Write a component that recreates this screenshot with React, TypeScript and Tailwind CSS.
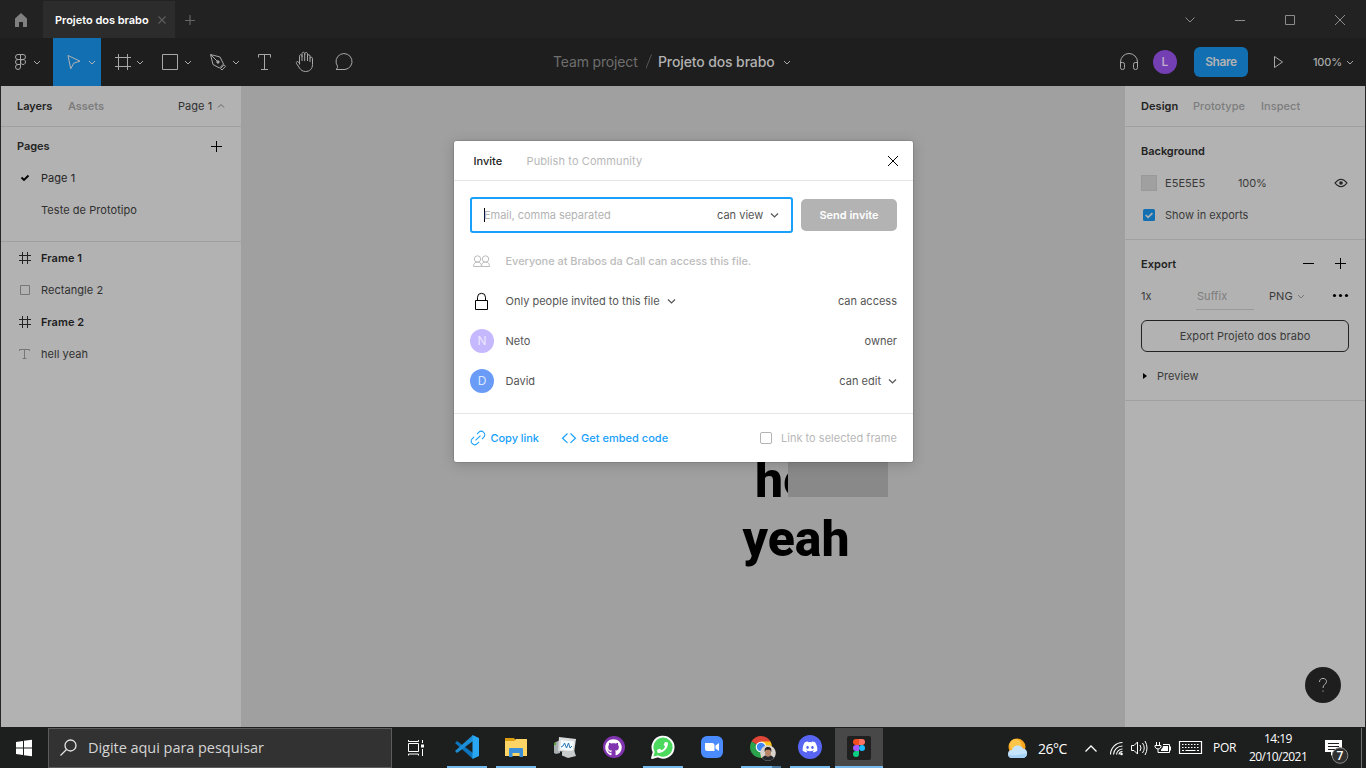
import React from "react";
import { FaDiscord, FaGithub, FaPhoneAlt } from "react-icons/fa";

type IcoProps = {
  box: [number, number, number, number];
  children: React.ReactNode;
  className?: string;
};

/* Icon drawn in window coordinates; box is x, y, width, height */
function Ico({ box, children, className = "" }: IcoProps) {
  return (
    <svg
      className={"block shrink-0 " + className}
      width={box[2]}
      height={box[3]}
      viewBox={box.join(" ")}
      fill="none"
      stroke="currentColor"
    >
      {children}
    </svg>
  );
}

function TitleBar() {
  return (
    <div className="flex h-[38px] bg-[#222222]">
      <Ico box={[0, 0, 43, 38]} className="text-[#808080]">
        <path d="M15 18.500L21 13l6 5.500V27h-4v-5h-4v5h-4z" fill="currentColor" stroke="none" />
      </Ico>
      <div className="mt-px flex h-[37px] w-[132px] items-center bg-[#2c2c2c] pl-3 text-white">
        <span className="w-[94px] whitespace-nowrap text-[11px] leading-4 font-semibold tracking-[-0.02px]">Projeto dos brabo</span>
        <Ico box={[149, 10, 26, 20]} className="text-[#5c5c5c]">
          <path d="M158.500 16.500l7 7M165.500 16.500l-7 7" strokeWidth="1.200" />
        </Ico>
      </div>
      <Ico box={[175, 0, 40, 38]} className="text-[#646464]">
        <path d="M185 20.500h10M190 15v10" strokeWidth="1.200" />
      </Ico>
      <div className="flex-1" />
      <Ico box={[1166, 0, 200, 38]} className="text-[#8c8c8c]">
        <path d="M1185.500 17.500l4.500 4.500 4.500-4.500M1235 20.500h10M1285.500 15.500h9v9h-9zM1335 15l10 10M1345 15l-10 10" />
      </Ico>
    </div>
  );
}

function Toolbar() {
  return (
    <div className="flex h-12 items-center bg-[#1e1e1e] text-[#a8a8a8]">
      <Ico box={[0, 38, 53, 48]}>
        <path d="M20.500 54.500h-2.500a2.500 2.500 0 0 0 0 5h2.500zM20.500 54.500h2.500a2.500 2.500 0 0 1 0 5h-2.500zM20.500 59.500h-2.500a2.500 2.500 0 0 0 0 5h2.500zM23 59.500a2.500 2.500 0 1 0 .01 0zM20.500 64.500h-2.500a2.500 2.500 0 1 0 2.500 2.500z" />
        <path d="M34 61l3 3 3-3" />
      </Ico>
      <Ico box={[53, 38, 48, 48]} className="bg-[#1270b2] text-[#b2b2b2]">
        <path d="M68 55.500l12 5.700-6.300 2-3 5.600z" />
        <path d="M89 61l3 3 3-3" />
      </Ico>
      <Ico box={[101, 38, 48, 48]}>
        <path d="M118.500 54v16M127.500 54v16M115 57.500h16M115 66.500h16" />
        <path d="M137 61l3 3 3-3" />
      </Ico>
      <Ico box={[149, 38, 48, 48]}>
        <path d="M162.500 54.500h15v15h-15z" />
        <path d="M185 61l3 3 3-3" />
      </Ico>
      <Ico box={[197, 38, 48, 48]}>
        <path d="M210.500 54.500l9.500 2.500 3.500 7-4 4-6.500-3.500zM211 55l6.500 6.500M220.500 68.500l3.500-3.700 1.500 1.500-3.500 3.700z" />
        <circle cx="218" cy="62" r="1.200" fill="currentColor" />
        <path d="M233 61l3 3 3-3" />
      </Ico>
      <Ico box={[245, 38, 40, 48]}>
        <path d="M258.500 57.500v-3h12v3M264.500 54.500v15M261 69.500h7" />
      </Ico>
      <Ico box={[285, 38, 40, 48]}>
        <path d="M299.500 64.500V56.200c0-2 2.500-2 2.500 0V61M302 57v-3.200c0-2 2.700-2 2.700 0V61M304.700 55v-1c0-2 2.800-2 2.800 0v7M307.500 56c0-1.700 2.500-1.700 2.500 0v6M310 58.500c0-1.700 2.500-1.700 2.500 0v6c0 4.500-3 7-7 7-3 0-4.500-1.500-6-3.500l-3-4.500c-.8-1.500 1-2.700 2-1.500l1.500 2" />
      </Ico>
      <Ico box={[325, 38, 40, 48]}>
        <path d="M336 69.500c1.300-1 1.800-2 1.500-3.300A8 8 0 1 1 345 69.500z" />
      </Ico>
      <div className="ml-[188px] flex items-center text-[14px] leading-5 whitespace-nowrap">
        <span className="w-[93px] text-[#6e6e6e] tracking-[-0.15px]">Team project</span>
        <Ico box={[646, 52, 12, 20]} className="text-[#555555]">
          <path d="M645.500 69.500l6-15" />
        </Ico>
        <span className="w-[125px] font-medium text-[#b2b2b2] tracking-[-0.12px]">Projeto dos brabo</span>
        <Ico box={[783, 52, 12, 20]}>
          <path d="M784 61l3 3 3-3" />
        </Ico>
      </div>
      <div className="flex-1" />
      <Ico box={[1115, 38, 38, 48]}>
        <path d="M1120.500 66v-4a8.500 8.500 0 0 1 17 0v4M1120.500 62.500h2.200q1.800 0 1.800 1.800v3.400q0 1.800-1.800 1.800h-.4q-1.800 0-1.800-1.800zM1137.500 62.500h-2.200q-1.800 0-1.800 1.800v3.400q0 1.800 1.800 1.800h.4q1.800 0 1.800-1.800z" />
      </Ico>
      <div className="flex size-6 items-center justify-center rounded-full bg-[#733fb2] text-[12px] font-medium text-[#c0b0cc]">L</div>
      <div className="ml-[17px] flex h-[30px] w-[54px] items-center justify-center rounded-[6px] bg-[#1270b2] text-[12px] font-semibold tracking-[-0.4px] text-[#b2b2b2]">Share</div>
      <Ico box={[1248, 38, 65, 48]}>
        <path d="M1274.500 56.500v11l8-5.500z" />
      </Ico>
      <span className="w-[29px] whitespace-nowrap text-[11px] font-medium tracking-[-0.2px]">100%</span>
      <Ico box={[1342, 38, 24, 48]}>
        <path d="M1347 61l3 3 3-3" />
      </Ico>
    </div>
  );
}

function HashIcon() {
  return (
    <Ico box={[17, 250, 24, 16]} className="text-[#232323]">
      <path d="M22.500 252v12M27.500 252v12M19 255.500h12M19 260.500h12" />
    </Ico>
  );
}

function LeftPanel() {
  return (
    <div className="flex w-[240px] flex-col bg-[#b2b2b2] text-[#303030]">
      <div className="flex h-[41px] items-center border-b border-[#a0a0a0] pl-4">
        <span className="w-[51px] font-semibold tracking-[-0.05px] text-[#232323]">Layers</span>
        <span className="w-[110px] font-semibold tracking-[-0.05px] text-[#7d7d7d]">Assets</span>
        <span className="w-[38px] whitespace-nowrap">Page 1</span>
        <Ico box={[216, 98, 12, 16]} className="text-[#666666]">
          <path d="M218 107.500l3-3 3 3" />
        </Ico>
      </div>
      <div className="h-[115px] border-b border-[#a0a0a0]">
        <div className="flex h-[35px] items-center pt-[3px] pl-4">
          <span className="w-[189px] font-semibold tracking-[-0.05px] text-[#232323]">Pages</span>
          <Ico box={[206, 136, 24, 18]} className="text-black">
            <path d="M211 145.500h11M216.500 140v11" />
          </Ico>
        </div>
        <div className="flex h-8 items-center pl-4 text-[#232323]">
          <Ico box={[17, 170, 24, 16]} className="text-black">
            <path d="M21.500 177.500l2.500 2.500 4.500-4.500" strokeWidth="1.800" />
          </Ico>
          Page 1
        </div>
        <div className="flex h-8 items-center pl-10">Teste de Prototipo</div>
      </div>
      <div className="flex h-8 items-center pl-4 font-semibold text-[#1c1c1c]">
        <HashIcon />
        Frame 1
      </div>
      <div className="flex h-8 items-center pl-4">
        <Ico box={[17, 282, 24, 16]} className="text-[#777777]">
          <path d="M20.500 285.500h9v9h-9z" />
        </Ico>
        Rectangle 2
      </div>
      <div className="flex h-8 items-center pl-4 font-semibold text-[#1c1c1c]">
        <HashIcon />
        Frame 2
      </div>
      <div className="flex h-8 items-center pl-4">
        <Ico box={[17, 346, 24, 16]} className="text-[#777777]">
          <path d="M19.500 351v-1.500h10v1.500M24.500 349.500v9M22.500 358.500h4" />
        </Ico>
        hell yeah
      </div>
    </div>
  );
}

function Canvas() {
  return (
    <div className="relative flex-1 overflow-hidden bg-[#a0a0a0]">
      <div className="absolute top-[365px] left-[475px] w-[160px] text-center font-['Roboto'] text-[50px] leading-[59px] font-extrabold tracking-normal text-black">
        hell
        <br />
        yeah
      </div>
      <div className="absolute top-[311px] left-[547px] h-[100px] w-[100px] bg-[#898989]" />
    </div>
  );
}

function RightPanel() {
  return (
    <div className="relative flex w-[240px] flex-col bg-[#b2b2b2] text-[#3a3a3a]">
      <div className="flex h-[41px] items-center border-b border-[#a0a0a0] pl-4 font-medium text-[#7d7d7d]">
        <span className="w-[52px] font-semibold text-[#232323]">Design</span>
        <span className="w-[68px]">Prototype</span>
        <span>Inspect</span>
      </div>
      <div className="h-[113px] border-b border-[#a0a0a0] pt-2 pl-4">
        <div className="flex h-8 items-center font-semibold tracking-[-0.03px] text-[#232323]">Background</div>
        <div className="flex h-8 items-center">
          <div className="mr-2 size-4 border border-[#999999] bg-[#a0a0a0]" />
          <span className="w-[73px]">E5E5E5</span>
          <span className="w-[95px] tracking-[-0.1px]">100%</span>
          <Ico box={[1333, 175, 16, 16]} className="text-[#232323]">
            <path d="M1335 183q6-7.500 12 0-6 7.500-12 0z" strokeWidth="1.200" />
            <circle cx="1341" cy="183" r="1.800" fill="currentColor" stroke="none" />
          </Ico>
        </div>
        <div className="flex h-8 items-center tracking-normal">
          <Ico box={[1141, 207, 24, 16]} className="text-[#b2b2b2]">
            <rect x="1143" y="209" width="12" height="12" rx="1.500" fill="#1270b2" stroke="none" />
            <path d="M1145.700 215l2.400 2.400 4.300-4.300" strokeWidth="1.600" />
          </Ico>
          Show in exports
        </div>
      </div>
      <div className="h-[161px] border-b border-[#a0a0a0] px-4 pt-2">
        <div className="flex h-8 items-center">
          <span className="w-[152px] font-semibold text-[#232323]">Export</span>
          <Ico box={[1293, 254, 56, 20]} className="text-black">
            <path d="M1303 263.500h11M1335 263.500h11M1340.500 258v11" />
          </Ico>
        </div>
        <div className="flex h-8 items-center">
          <span className="w-[55px]">1x</span>
          <span className="flex h-[27px] w-[58px] items-center border-b border-[#9a9a9a] pl-px text-[#7d7d7d]">Suffix</span>
          <span className="w-[27px] pl-[15px]">PNG</span>
          <Ico box={[1281, 288, 68, 16]} className="text-[#777777]">
            <path d="M1298 295l3 3 3-3" />
            <g fill="black" stroke="none">
              <circle cx="1334.500" cy="295.500" r="1.600" />
              <circle cx="1340.500" cy="295.500" r="1.600" />
              <circle cx="1346.500" cy="295.500" r="1.600" />
            </g>
          </Ico>
        </div>
        <div className="mt-2 flex h-8 items-center justify-center rounded-[6px] border border-[#232323]">Export Projeto dos brabo</div>
        <div className="mt-2 flex h-8 items-center">
          <Ico box={[1141, 368, 16, 16]} className="text-black">
            <path d="M1143 373v6l4-3z" fill="currentColor" stroke="none" />
          </Ico>
          Preview
        </div>
      </div>
      <div className="absolute top-[581px] left-[180px] flex size-9 items-center justify-center rounded-full bg-[#1e1e1e]">
        <Ico box={[1313, 675, 20, 20]} className="text-[#b2b2b2]">
          <path d="M1319.500 682c0-5 7-4.500 7-.5 0 3-3.500 2.500-3.500 6.500M1323 690.500v1.200" />
        </Ico>
      </div>
    </div>
  );
}

function InviteModal() {
  return (
    <div className="absolute top-[141px] left-[454px] h-[321px] w-[459px] rounded-[2px] bg-white tracking-[0.01px] text-[#555555] shadow-[0_2px_14px_rgba(0,0,0,0.18),0_0_0_0.5px_rgba(0,0,0,0.2)]">
      <div className="flex h-10 items-center border-b border-[#e5e5e5] pl-[19.5px]">
        <span className="w-[53px] font-medium text-[#222222]">Invite</span>
        <span className="w-[354.5px] text-[#b8b8b8] tracking-[0.1px]">Publish to Community</span>
        <Ico box={[881, 151, 24, 20]} className="text-black">
          <path d="M888 156l10 10M898 156l-10 10" />
        </Ico>
      </div>
      <div className="flex h-[60px] items-center gap-2 px-4 pt-2">
        <div className="flex h-9 w-[323px] items-center rounded-[3px] border-2 border-[#18a0fb]">
          <div className="ml-3 h-[14px] w-px bg-black" />
          <span className="-ml-px w-[233px] text-[#b3b3b3] tracking-[-0.04px]">Email, comma separated</span>
          <span className="w-[51px]">can view</span>
          <Ico box={[768, 207, 16, 16]}>
            <path d="M771 213.500l3.500 3.500 3.500-3.500" strokeWidth="1.200" />
          </Ico>
        </div>
        <div className="flex h-8 w-24 items-center justify-center rounded-[5px] bg-[#b3b3b3] font-semibold text-white">Send invite</div>
      </div>
      <div className="flex h-10 items-center pl-4 font-medium tracking-[-0.05px] text-[#bcbcbc]">
        <Ico box={[470, 251, 35.5, 20]} className="text-[#bcbcbc]">
          <circle cx="477.500" cy="259" r="3.200" />
          <circle cx="485.500" cy="259" r="3.200" />
          <path d="M473.500 266.500c0-3 1.500-4.500 4-4.500s4 1.500 4 4.500zM481.500 266.500c0-3 1.500-4.500 4-4.500s4 1.500 4 4.500z" />
        </Ico>
        Everyone at Brabos da Call can access this file.
      </div>
      <div className="flex h-10 items-center pr-4 pl-4">
        <Ico box={[470, 291, 35.5, 20]} className="text-black">
          <path d="M475.500 300.500h12v9h-12zM477.500 300.500v-3.200a4 4 0 0 1 8 0v3.200" />
        </Ico>
        <span className="w-[158px]">Only people invited to this file</span>
        <Ico box={[664, 293, 16, 16]}>
          <path d="M668 299.500l3.500 3.500 3.500-3.500" strokeWidth="1.200" />
        </Ico>
        <span className="flex-1 text-right">can access</span>
      </div>
      <div className="flex h-10 items-center px-4">
        <div className="mr-[11.5px] flex size-6 items-center justify-center rounded-full bg-[#c5b8fe] text-[12px] text-[#ece7ff]">N</div>
        Neto
        <span className="flex-1 text-right">owner</span>
      </div>
      <div className="flex h-10 items-center px-4">
        <div className="mr-[11.5px] flex size-6 items-center justify-center rounded-full bg-[#699bf7] text-[12px] text-[#dce8ff]">D</div>
        David
        <span className="flex-1 text-right">can edit</span>
        <Ico box={[881, 373, 16, 16]}>
          <path d="M889 379.500l3.500 3.500 3.500-3.500" strokeWidth="1.200" />
        </Ico>
      </div>
      <div className="mt-[12px] flex h-[49px] items-center border-t border-[#e5e5e5] pl-4 text-[#18a0fb]">
        <Ico box={[470, 428, 20.5, 20]}>
          <g transform="rotate(-45 478 438)">
            <path d="M476 434.500h-2.500a3.500 3.500 0 0 0 0 7h2.500M480 434.500h2.500a3.500 3.500 0 0 1 0 7h-2.500M474.500 438h7" />
          </g>
        </Ico>
        <span className="w-[70px] font-medium tracking-[-0.05px]">Copy link</span>
        <Ico box={[561, 430, 20.5, 16]}>
          <path d="M567.500 433.500l-5 4.700 5 4.700M570.500 433.500l5 4.700-5 4.700" strokeWidth="1.200" />
        </Ico>
        <span className="w-[179px] font-medium tracking-[0.02px]">Get embed code</span>
        <div className="mr-[9px] size-3 rounded-[2px] border border-[#b3b3b3]" />
        <span className="text-[#b8b8b8] whitespace-nowrap tracking-[0.02px]">Link to selected frame</span>
      </div>
    </div>
  );
}

function Tile({ children, open = true }: { children: React.ReactNode; open?: boolean }) {
  return (
    <div className="flex h-10 w-[49px] flex-col items-center">
      <div className="flex h-[38px] items-center justify-center">{children}</div>
      {open && <div className="h-[2px] w-10 bg-[#76b9ed]" />}
    </div>
  );
}

function Taskbar() {
  return (
    <div className="flex h-[41px] bg-[#1d1e1e] pt-px font-['Open_Sans','Noto_Sans',sans-serif] tracking-normal text-white">
      <Ico box={[0, 728, 48, 40]}>
        <path d="M16 742l7-1v6.500h-7zM24 740.800l8-1.100v7.800h-8zM16 748.500h7v6.500l-7-1zM24 748.500h8v7.800l-8-1.100z" fill="white" stroke="none" />
      </Ico>
      <div className="flex w-[344px] items-center border border-[#5c5c5c] bg-[#323232] text-[14.5px] text-[#d5d5d5]">
        <Ico box={[49, 729, 39, 38]} className="text-[#e5e5e5]">
          <circle cx="70.500" cy="745.500" r="5.500" strokeWidth="1.300" />
          <path d="M66.500 749.500l-6 6" strokeWidth="1.300" />
        </Ico>
        <span className="whitespace-nowrap tracking-[-0.04px]">Digite aqui para pesquisar</span>
      </div>
      <Ico box={[392, 728, 50, 40]}>
        <path d="M408.500 743.500h10v8h-10zM408.500 740v1.500h10V740M408.500 755.500V754h10v1.500M422.500 740v3M422.500 749v7" />
        <path d="M421 744.500h3v3h-3z" fill="white" stroke="none" />
      </Ico>
      <Tile>
        <Ico box={[0, 0, 24, 24]}>
          <g stroke="none">
            <path d="M0 8l2-2 16 12v6z" fill="#0d75bd" />
            <path d="M0 16l2 2L18 6V0z" fill="#1c8fd6" />
            <path d="M17.500 0L24 3v18l-6.500 3z" fill="#2aa7f2" />
          </g>
        </Ico>
      </Tile>
      <Tile>
        <Ico box={[0, 0, 24, 24]}>
          <g stroke="none">
            <path d="M1 3h9l1.500 2H23v4H1z" fill="#dd9d10" />
            <path d="M1 6h9l2-2h11v17H1z" fill="#fbd465" />
            <path d="M5 14q0-1 1-1h12q1 0 1 1v8h-3.500v-4h-7v4H5z" fill="#3b8fd8" />
          </g>
        </Ico>
      </Tile>
      <Tile open={false}>
        <Ico box={[0, 0, 24, 24]}>
          <g stroke="none">
            <path d="M1 8l6-3v13l-4 1-2-1z" fill="#a8adb0" />
            <path d="M1 8h2v2H1z" fill="#55a630" />
            <path d="M6 2l17 2-2 14-16-2z" fill="#d9dbdc" />
            <path d="M8 5l13 1.500-1.300 9.500L7 14.500z" fill="#f5fbff" />
            <path d="M9 16.500l12-1 2 5.500-8 2-6-2.500z" fill="#c9cccd" />
          </g>
          <path d="M8 12l2-1 1.500-3 2 5 2-5 1.500 5 2-2" stroke="#2776b8" />
        </Ico>
      </Tile>
      <Tile open={false}>
        <div className="flex size-[22px] items-center justify-center rounded-full bg-[#8134af]">
          <FaGithub className="size-[17px] text-white" />
        </div>
      </Tile>
      <Tile>
        <div className="relative flex size-6 items-center justify-center">
          <Ico box={[0, 0, 24, 24]}>
            <path d="M1 23l1.700-6A10.500 10.500 0 1 1 7 21.400z" fill="#4bda5e" stroke="white" strokeWidth="1.900" strokeLinejoin="round" />
          </Ico>
          <FaPhoneAlt className="absolute top-[6.500px] left-[6.500px] size-[11px] -scale-x-100 text-white" />
        </div>
      </Tile>
      <Tile open={false}>
        <div className="flex size-[22px] items-center justify-center rounded-[6px] bg-[#4a8cff]">
          <Ico box={[0, 0, 16, 10]}>
            <path d="M1 1h7q2.500 0 2.500 2.500V9h-7Q1 9 1 6.500zM11.500 3.500L15 1v8l-3.500-2.500z" fill="white" stroke="none" />
          </Ico>
        </div>
      </Tile>
      <div className="relative">
        <Tile>
          <Ico box={[0, 0, 24, 24]}>
            <g stroke="none">
              <path d="M12 12L2.500 6.500A11 11 0 0 1 21.500 6.500z" fill="#e04636" />
              <path d="M12 12L2.500 6.500A11 11 0 0 0 12 23z" fill="#2ba24c" />
              <path d="M12 12L12 23A11 11 0 0 0 21.500 6.500H12z" fill="#fbc116" />
              <circle cx="12" cy="12" r="5.300" fill="white" />
              <circle cx="12" cy="12" r="4.200" fill="#4286f5" />
            </g>
          </Ico>
        </Tile>
        <Ico box={[0, 0, 16, 16]} className="absolute top-[17px] left-[24px]">
          <g stroke="none">
            <circle cx="8" cy="8" r="7.800" fill="#d8d3cc" />
            <path d="M2 13q2-3 6-3t6 3q-2.500 2.800-6 2.800T2 13z" fill="#23272b" />
            <ellipse cx="8" cy="7.500" rx="3" ry="4.200" fill="#b88468" />
            <path d="M4.600 7q-.5-5 3.400-5t3.400 5L10 4.800H6z" fill="#241c1a" />
          </g>
        </Ico>
        <div className="absolute right-[4px] bottom-0 h-[2px] w-[9px] bg-[#4d7ba0]" />
      </div>
      <Tile>
        <div className="flex size-6 items-center justify-center rounded-full bg-[#5865f2]">
          <FaDiscord className="size-4 text-white" />
        </div>
      </Tile>
      <div className="ml-px flex h-10 w-12 flex-col items-center justify-between bg-[#484848] pt-2">
        <div className="flex size-6 items-center justify-center rounded-[2px] bg-[#202020]">
          <Ico box={[0, 0, 12, 18]}>
            <g stroke="none">
              <path d="M6 0H3a3 3 0 0 0 0 6h3z" fill="#f24e1e" />
              <path d="M6 0h3a3 3 0 0 1 0 6H6z" fill="#ff7262" />
              <path d="M6 6H3a3 3 0 0 0 0 6h3z" fill="#a259ff" />
              <circle cx="9" cy="9" r="3" fill="#1abcfe" />
              <path d="M6 12H3a3 3 0 1 0 3 3z" fill="#0acf83" />
            </g>
          </Ico>
        </div>
        <div className="h-[2px] w-12 bg-[#76b9ed]" />
      </div>
      <div className="flex-1" />
      <Ico box={[1003, 728, 35, 40]}>
        <g stroke="none">
          <circle cx="1017" cy="747" r="8.500" fill="#f9a51f" />
          <circle cx="1015.500" cy="745" r="6" fill="#fdc648" />
          <path d="M1012 758a4 4 0 0 1 0-8 6 6 0 0 1 11-1.500 4.800 4.800 0 0 1 0 9.500z" fill="#c5e3fa" />
          <path d="M1012 758a4 4 0 0 1-3.800-3.500q7 2 18.500-1.500a4.800 4.800 0 0 1-3.700 5z" fill="#a8d2f4" />
        </g>
      </Ico>
      <span className="flex w-[42px] items-center pt-px text-[14px] tracking-[-0.5px] whitespace-nowrap">26°C</span>
      <Ico box={[1080, 728, 133, 40]}>
        <path d="M1085.500 751.500l5.500-5.500 5.500 5.500" strokeWidth="1.300" />
        <path d="M1110.500 754.500a12 12 0 0 1 12-12M1113.500 754.500a9 9 0 0 1 9-8.500M1116.500 754.500a6 6 0 0 1 6-5.500M1119 754.500a3.500 3.500 0 0 1 3.500-3" strokeWidth="1.100" />
        <circle cx="1121.500" cy="754" r="1.300" fill="white" stroke="none" />
        <path d="M1131.500 745.500h2.500l3.500-3.500v12l-3.500-3.500h-2.500zM1140 745q2 3 0 6M1142.500 743q3.500 5 0 10M1145 741q4 7 0 14" />
        <path d="M1156.500 742v3M1159.500 742v3M1155 745.500h6v1.500q-1 2-3 2t-3-2zM1158 749v3.500h3M1163 744.500h6.500v8H1161M1170.500 746.500v4" />
        <path d="M1163 746h5v5h-7v-1.500q2-1 2-3.500z" fill="white" stroke="none" />
        <path d="M1179.500 741.500h22v12h-22z" strokeWidth="1.200" />
        <path d="M1182 744.500h17M1182 747.500h17" strokeDasharray="1.500 1.500" />
        <path d="M1182 750.500h2M1185.500 750.500h10M1197 750.500h2" />
      </Ico>
      <span className="flex w-[36px] items-center text-[12px] tracking-[-0.3px]">POR</span>
      <div className="w-[58px] pt-[2px] text-center text-[12px] leading-[18px] tracking-[-0.55px] whitespace-nowrap">
        <div>14:19</div>
        <div>20/10/2021</div>
      </div>
      <Ico box={[1307, 728, 59, 40]}>
        <path d="M1325 740h17v12h-7l-4 4v-4h-6z" fill="white" stroke="none" />
        <path d="M1328 743.500h11M1328 746.500h11M1328 749.500h7" stroke="#1d1e1e" />
        <circle cx="1340" cy="755.500" r="7.800" fill="#303030" stroke="#888888" />
        <text x="1340" y="760" textAnchor="middle" fontSize="12" fontWeight="600" fill="white" stroke="none">
          7
        </text>
        <path d="M1361.500 728v40" stroke="#707070" />
      </Ico>
    </div>
  );
}

export default function App() {
  return (
    <div className="relative h-[768px] w-[1366px] overflow-hidden font-['Inter',sans-serif] text-[11px] leading-4 tracking-[0.055px]">
      <div className="flex h-[727px] flex-col">
        <TitleBar />
        <Toolbar />
        <div className="flex flex-1 border-x border-[#262626]">
          <LeftPanel />
          <Canvas />
          <RightPanel />
        </div>
      </div>
      <Taskbar />
      <InviteModal />
    </div>
  );
}
